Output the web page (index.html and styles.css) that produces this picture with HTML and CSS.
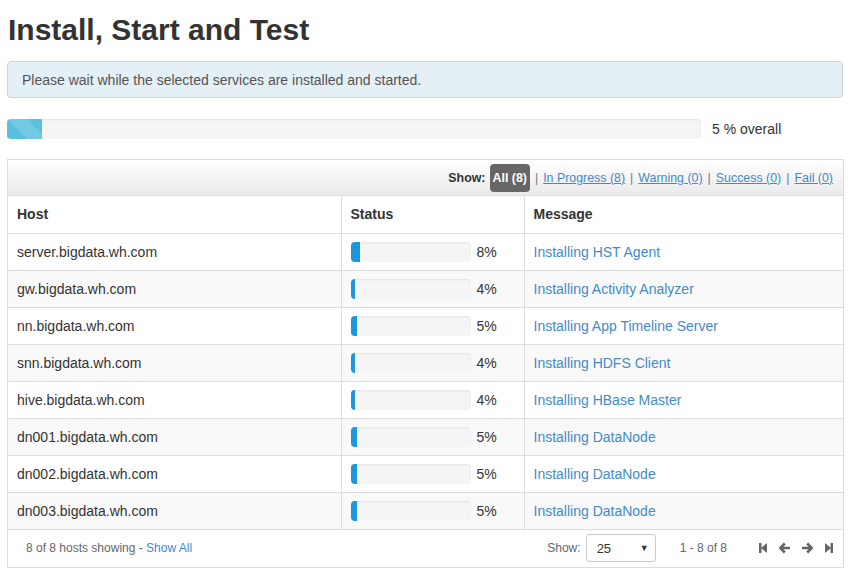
FILE: index.html
```html
<!DOCTYPE html>
<html>
<head>
<meta charset="utf-8">
<link rel="stylesheet" href="styles.css">
</head>
<body>
<div class="page">
  <h2 class="title">Install, Start and Test</h2>
  <div class="alert">Please wait while the selected services are installed and started.</div>
  <div class="overall">
    <div class="track big"><div class="fill striped" style="width:5%"></div></div>
    <span class="overall-label">5 % overall</span>
  </div>
  <div class="box">
    <div class="toolbar">
      <span class="show">Show:</span>
      <span class="badge">All (8)</span><span class="sep">|</span>
      <a class="flt">In Progress (8)</a><span class="sep">|</span>
      <a class="flt">Warning (0)</a><span class="sep">|</span>
      <a class="flt">Success (0)</a><span class="sep">|</span>
      <a class="flt">Fail (0)</a>
    </div>
    <table class="grid">
      <thead>
        <tr><th class="c-host">Host</th><th class="c-status">Status</th><th>Message</th></tr>
      </thead>
      <tbody>
        <tr><td>server.bigdata.wh.com</td><td><div class="st"><div class="track"><div class="fill" style="width:8%"></div></div><span>8%</span></div></td><td><a class="msg">Installing HST Agent</a></td></tr>
        <tr><td>gw.bigdata.wh.com</td><td><div class="st"><div class="track"><div class="fill" style="width:4%"></div></div><span>4%</span></div></td><td><a class="msg">Installing Activity Analyzer</a></td></tr>
        <tr><td>nn.bigdata.wh.com</td><td><div class="st"><div class="track"><div class="fill" style="width:5%"></div></div><span>5%</span></div></td><td><a class="msg">Installing App Timeline Server</a></td></tr>
        <tr><td>snn.bigdata.wh.com</td><td><div class="st"><div class="track"><div class="fill" style="width:4%"></div></div><span>4%</span></div></td><td><a class="msg">Installing HDFS Client</a></td></tr>
        <tr><td>hive.bigdata.wh.com</td><td><div class="st"><div class="track"><div class="fill" style="width:4%"></div></div><span>4%</span></div></td><td><a class="msg">Installing HBase Master</a></td></tr>
        <tr><td>dn001.bigdata.wh.com</td><td><div class="st"><div class="track"><div class="fill" style="width:5%"></div></div><span>5%</span></div></td><td><a class="msg">Installing DataNode</a></td></tr>
        <tr><td>dn002.bigdata.wh.com</td><td><div class="st"><div class="track"><div class="fill" style="width:5%"></div></div><span>5%</span></div></td><td><a class="msg">Installing DataNode</a></td></tr>
        <tr><td>dn003.bigdata.wh.com</td><td><div class="st"><div class="track"><div class="fill" style="width:5%"></div></div><span>5%</span></div></td><td><a class="msg">Installing DataNode</a></td></tr>
      </tbody>
    </table>
    <div class="footer">
      <div class="info">8 of 8 hosts showing - <a class="msg">Show All</a></div>
      <div class="pager">
        <span class="lbl">Show:</span>
        <div class="select"><span>25</span><span class="caret">&#9660;</span></div>
        <span class="range">1 - 8 of 8</span>
        <div class="nav">
          <svg width="8" height="12" viewBox="0 0 8 12"><rect x="0" y="1" width="2.5" height="10" fill="#666"/><path d="M8 1 L2 6 L8 11 Z" fill="#666"/></svg>
          <svg width="11" height="12" viewBox="0 0 11 12"><path d="M5.8 1.5 L1.3 6 L5.8 10.5 M2 6 H11" stroke="#666" stroke-width="2.6" fill="none"/></svg>
          <svg width="11" height="12" viewBox="0 0 11 12"><path d="M5.2 1.5 L9.7 6 L5.2 10.5 M9 6 H0" stroke="#666" stroke-width="2.6" fill="none"/></svg>
          <svg width="8" height="12" viewBox="0 0 8 12"><rect x="5.5" y="1" width="2.5" height="10" fill="#666"/><path d="M0 1 L6 6 L0 11 Z" fill="#666"/></svg>
        </div>
      </div>
    </div>
  </div>
</div>
</body>
</html>
```

FILE: styles.css
```css
* { box-sizing: border-box; }
body {
  margin: 0;
  font-family: "Liberation Sans", Arial, sans-serif;
  font-size: 14px;
  color: #333;
  background: #fff;
}
.page { padding: 0 5px 0 7px; }
.title {
  margin: 0;
  padding: 12px 0 0 1px;
  font-size: 30px;
  font-weight: bold;
  line-height: 36px;
  color: #333;
}
.alert {
  margin-top: 13px;
  height: 37px;
  padding: 0 14px;
  display: flex;
  align-items: center;
  background: #e4eff6;
  border: 1px solid #c9d6df;
  border-radius: 4px;
  color: #555;
  font-size: 14px;
}
.overall {
  margin-top: 21px;
  display: flex;
  align-items: center;
  gap: 11px;
}
.track {
  background: #f5f5f5;
  border-radius: 4px;
  box-shadow: inset 0 1px 2px rgba(0,0,0,0.08);
  overflow: hidden;
  height: 20px;
}
.track.big { width: 694px; }
.fill { height: 100%; background: #1c97dd; }
.fill.striped {
  background-color: #5bc0de;
  background-image: linear-gradient(45deg, rgba(255,255,255,.15) 25%, transparent 25%, transparent 50%, rgba(255,255,255,.15) 50%, rgba(255,255,255,.15) 75%, transparent 75%, transparent);
  background-size: 40px 40px;
}
.overall-label { color: #333; }
.box {
  margin-top: 20px;
  border: 1px solid #ddd;
  width: 837px;
}
.toolbar {
  height: 36px;
  display: flex;
  align-items: center;
  justify-content: flex-end;
  padding-right: 10px;
  background: linear-gradient(#fff, #eaeaea);
  border-bottom: 1px solid #ddd;
  font-size: 12.4px;
}
.show { font-weight: bold; color: #333; margin-right: 4px; }
.badge {
  background: #666;
  color: #fff;
  font-weight: bold;
  border-radius: 4px;
  padding: 7px 3px;
  line-height: 14px;
}
.sep { color: #777; margin: 0 5px 0 5px; }
.flt { color: #428bca; text-decoration: underline; }
.grid {
  width: 100%;
  border-collapse: collapse;
}
.grid th, .grid td {
  height: 37px;
  padding: 0 9px;
  text-align: left;
  border: 1px solid #ddd;
  vertical-align: middle;
}
.grid tr > :first-child { border-left: 0; }
.grid tr > :last-child { border-right: 0; }
.grid thead th { border-top: 0; font-weight: bold; height: 37px; }
.grid tbody tr:nth-child(even) { background: #f9f9f9; }
.c-host { width: 333px; }
.c-status { width: 183px; }
.st { display: flex; align-items: center; gap: 6px; }
.st .track { width: 120px; height: 20px; }
.msg { color: #428bca; text-decoration: none; }
.footer {
  height: 37px;
  display: flex;
  align-items: center;
  justify-content: space-between;
  padding: 0 10px 0 18px;
  font-size: 12px;
  color: #666;
}
.pager { display: flex; align-items: center; }
.lbl { margin-right: 5px; }
.select {
  width: 70px;
  height: 28px;
  border: 1px solid #ccc;
  border-radius: 3px;
  display: flex;
  align-items: center;
  justify-content: space-between;
  padding: 0 6px 0 10px;
  color: #333;
  font-size: 13px;
  background: #fff;
}
.caret { font-size: 9px; color: #333; }
.range { margin-left: 24px; margin-right: 32px; }
.nav { display: flex; align-items: center; gap: 12px; }
.nav svg { display: block; }
```
